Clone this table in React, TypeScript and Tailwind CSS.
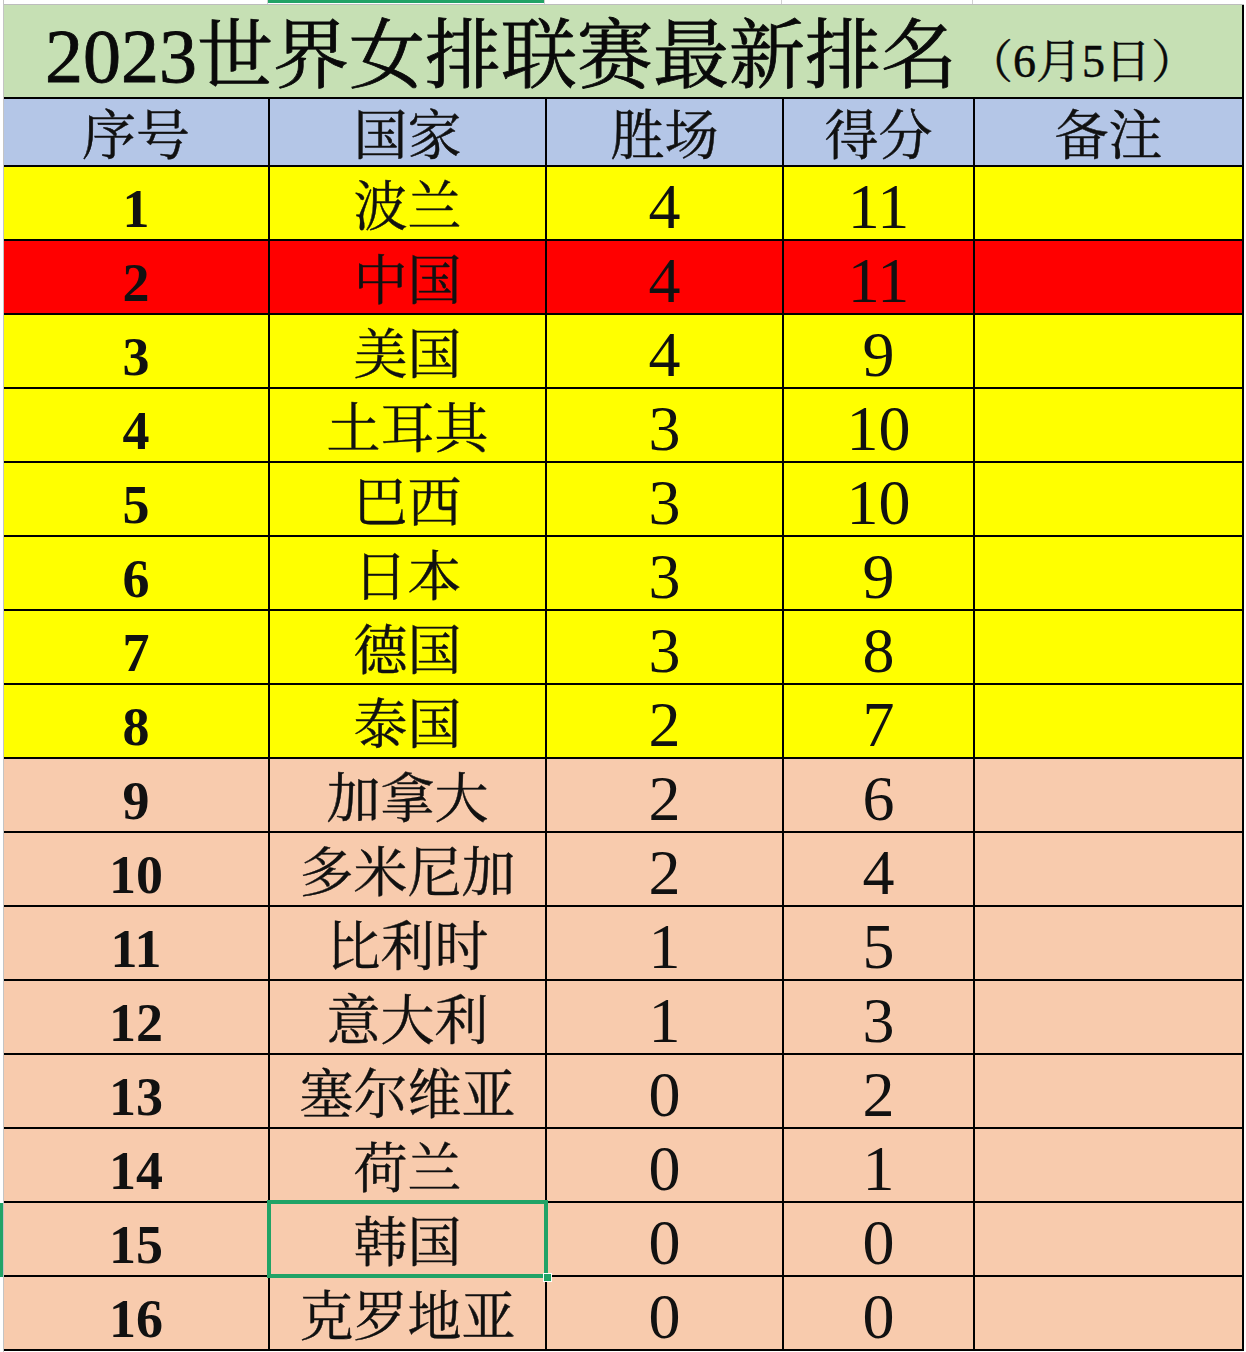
import React from "react";

type Row = {
  no: number;
  name: string;
  wins: number;
  points: number;
  tone: "yellow" | "red" | "peach";
};

const rows: Row[] = [
  { no: 1, name: "波兰", wins: 4, points: 11, tone: "yellow" },
  { no: 2, name: "中国", wins: 4, points: 11, tone: "red" },
  { no: 3, name: "美国", wins: 4, points: 9, tone: "yellow" },
  { no: 4, name: "土耳其", wins: 3, points: 10, tone: "yellow" },
  { no: 5, name: "巴西", wins: 3, points: 10, tone: "yellow" },
  { no: 6, name: "日本", wins: 3, points: 9, tone: "yellow" },
  { no: 7, name: "德国", wins: 3, points: 8, tone: "yellow" },
  { no: 8, name: "泰国", wins: 2, points: 7, tone: "yellow" },
  { no: 9, name: "加拿大", wins: 2, points: 6, tone: "peach" },
  { no: 10, name: "多米尼加", wins: 2, points: 4, tone: "peach" },
  { no: 11, name: "比利时", wins: 1, points: 5, tone: "peach" },
  { no: 12, name: "意大利", wins: 1, points: 3, tone: "peach" },
  { no: 13, name: "塞尔维亚", wins: 0, points: 2, tone: "peach" },
  { no: 14, name: "荷兰", wins: 0, points: 1, tone: "peach" },
  { no: 15, name: "韩国", wins: 0, points: 0, tone: "peach" },
  { no: 16, name: "克罗地亚", wins: 0, points: 0, tone: "peach" },
];

const toneBg = {
  yellow: "bg-[#ffff00]",
  red: "bg-[#ff0000]",
  peach: "bg-[#f8cbad]",
};

const headers = ["序号", "国家", "胜场", "得分", "备注"];

function Cell({
  bg,
  children,
  className = "",
}: {
  bg: string;
  children?: React.ReactNode;
  className?: string;
}) {
  return (
    <div
      className={`${bg} relative flex h-[72px] items-center justify-center leading-none text-[#111] ${className}`}
    >
      {children}
    </div>
  );
}

export default function App() {
  return (
    <div className="flex w-[1246px] h-[1352px] overflow-hidden bg-white font-['Liberation_Serif','Noto_Serif_CJK_SC','Noto_Sans_CJK_SC',serif]">
      {/* row header edge */}
      <div className="flex w-[4px] flex-col border-r border-[#c4c4c4]">
        <div className="h-[1203px]" />
        <div className="h-[74px] w-[3px] bg-[#21a366]" />
      </div>

      <div className="flex flex-col">
        {/* column header edge */}
        <div className="flex h-[5px] border-b border-[#bdbdbd]">
          <div className="w-[264px] border-r border-[#d0d0d0]" />
          <div className="w-[277px] border-r border-[#d0d0d0]">
            <div className="h-[3px] bg-[#21a366]" />
          </div>
          <div className="w-[237px] border-r border-[#d0d0d0]" />
          <div className="w-[191px] border-r border-[#d0d0d0]" />
          <div className="w-[269px]" />
        </div>

        <div className="grid grid-cols-[264px_275px_235px_189px_267px] gap-[2px] bg-black pr-[2px] pb-[2px]">
          <div className="col-span-5 flex h-[92px] items-center justify-start bg-[#c6e0b4] pl-[41px] pt-[10px] leading-none text-[#0a0a0a]">
            <span className="text-[76px] [-webkit-text-stroke:0.8px_#0a0a0a]">
              2023世界女排联赛最新排名
            </span>
            <span className="ml-[10px] mt-[12px] text-[46px] [-webkit-text-stroke:0.5px_#0a0a0a]">
              （6月5日）
            </span>
          </div>

          {headers.map((h) => (
            <div
              key={h}
              className="flex h-[66px] items-center justify-center bg-[#b4c6e7] pt-[10px] text-[54px] leading-none text-[#111] [-webkit-text-stroke:0.5px_#111]"
            >
              {h}
            </div>
          ))}

          {rows.map((r) => {
            const bg = toneBg[r.tone];
            return (
              <React.Fragment key={r.no}>
                <Cell bg={bg} className="pt-[12px] text-[54px] font-bold">
                  {r.no}
                </Cell>
                <Cell bg={bg} className="pt-[10px] text-[54px] [-webkit-text-stroke:0.4px_#111]">
                  {r.name}
                  {r.no === 15 && (
                    <>
                      <div className="pointer-events-none absolute -left-[3px] -top-[3px] -right-[3px] -bottom-[3px] z-10 border-[4px] border-[#21a366]" />
                      <div className="absolute -bottom-[7px] -right-[7px] z-20 h-[9px] w-[9px] border border-white bg-[#21a366]" />
                    </>
                  )}
                </Cell>
                <Cell bg={bg} className="pt-[8px] text-[64px]">
                  {r.wins}
                </Cell>
                <Cell bg={bg} className="pt-[8px] text-[64px]">
                  {r.points}
                </Cell>
                <Cell bg={bg} />
              </React.Fragment>
            );
          })}
        </div>
      </div>
    </div>
  );
}
